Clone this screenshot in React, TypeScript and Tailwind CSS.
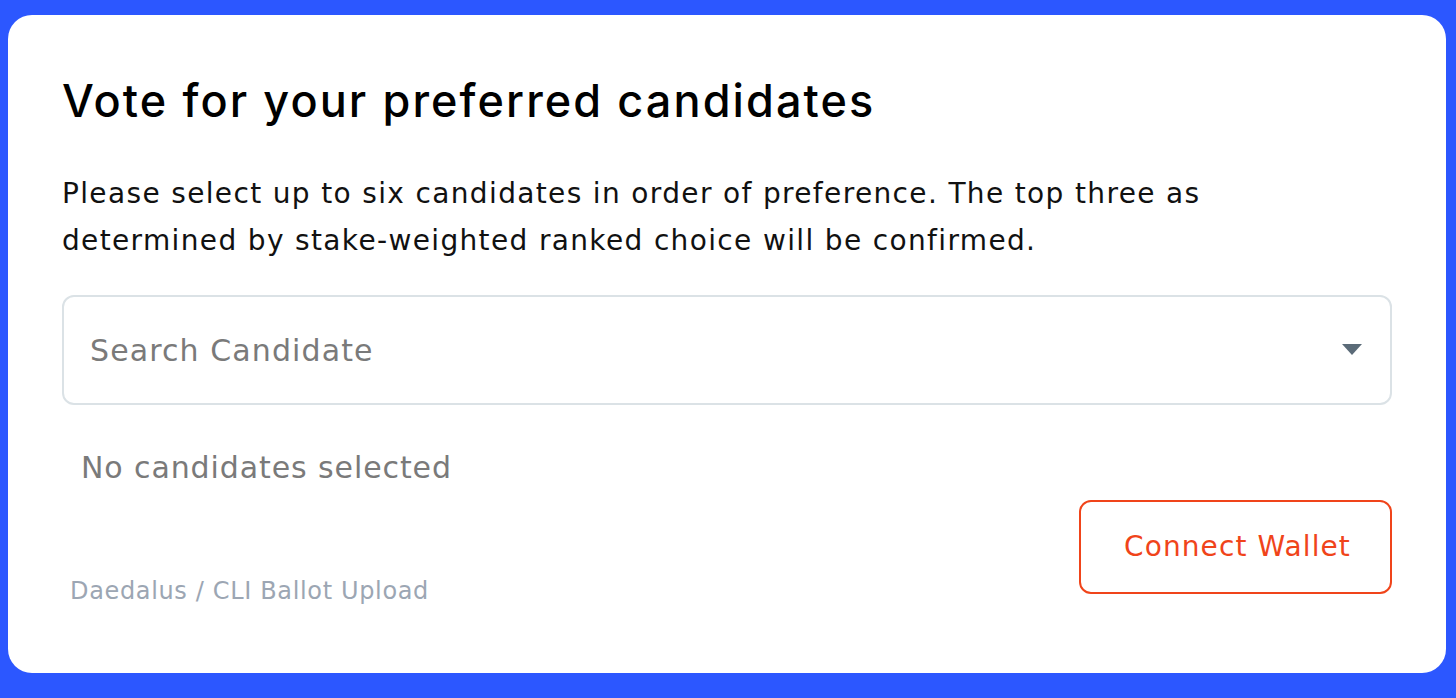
export default function App() {
  return (
    <div className="h-[698px] w-[1456px] bg-[#2c57ff] pt-[15px] pl-[8px] pr-[10px] pb-[25px] font-['DejaVu_Sans',sans-serif]">
      <div className="h-full rounded-[24px] bg-white pt-[56px] pl-[54px] pr-[54px]">
        <h1 className="font-['Inter',sans-serif] text-[45px] font-medium leading-[60px] tracking-[2.1px] text-black">
          Vote for your preferred candidates
        </h1>
        <p className="mt-[39px] text-[28px] leading-[47px] tracking-[1.35px] text-[#111]">
          Please select up to six candidates in order of preference. The top three as
          <br />
          determined by stake-weighted ranked choice will be confirmed.
        </p>
        <div className="mt-[31px] flex h-[110px] items-center justify-between rounded-[12px] border-2 border-[#dbe2e6] pl-[26px] pr-[28px]">
          <span className="text-[30px] tracking-[1.1px] text-[#7a7a7a]">Search Candidate</span>
          <svg width="20" height="12" viewBox="0 0 20 12">
            <path d="M0 0 L20 0 L10 11 Z" fill="#5b6b78" />
          </svg>
        </div>
        <p className="mt-[43px] pl-[19px] text-[30px] leading-[40px] tracking-[0.9px] text-[#7a7a7a]">No candidates selected</p>
        <div className="mt-[12px] flex items-end justify-between">
          <button className="mb-[-15px] pl-[8px] text-[24px] tracking-[0.65px] text-[#9ca6b3]">Daedalus / CLI Ballot Upload</button>
          <button className="flex h-[94px] w-[313px] items-center justify-center rounded-[12px] border-2 border-[#f0441a] pl-[4px] text-[28px] tracking-[1.1px] text-[#f0441a]">
            Connect Wallet
          </button>
        </div>
      </div>
    </div>
  );
}
